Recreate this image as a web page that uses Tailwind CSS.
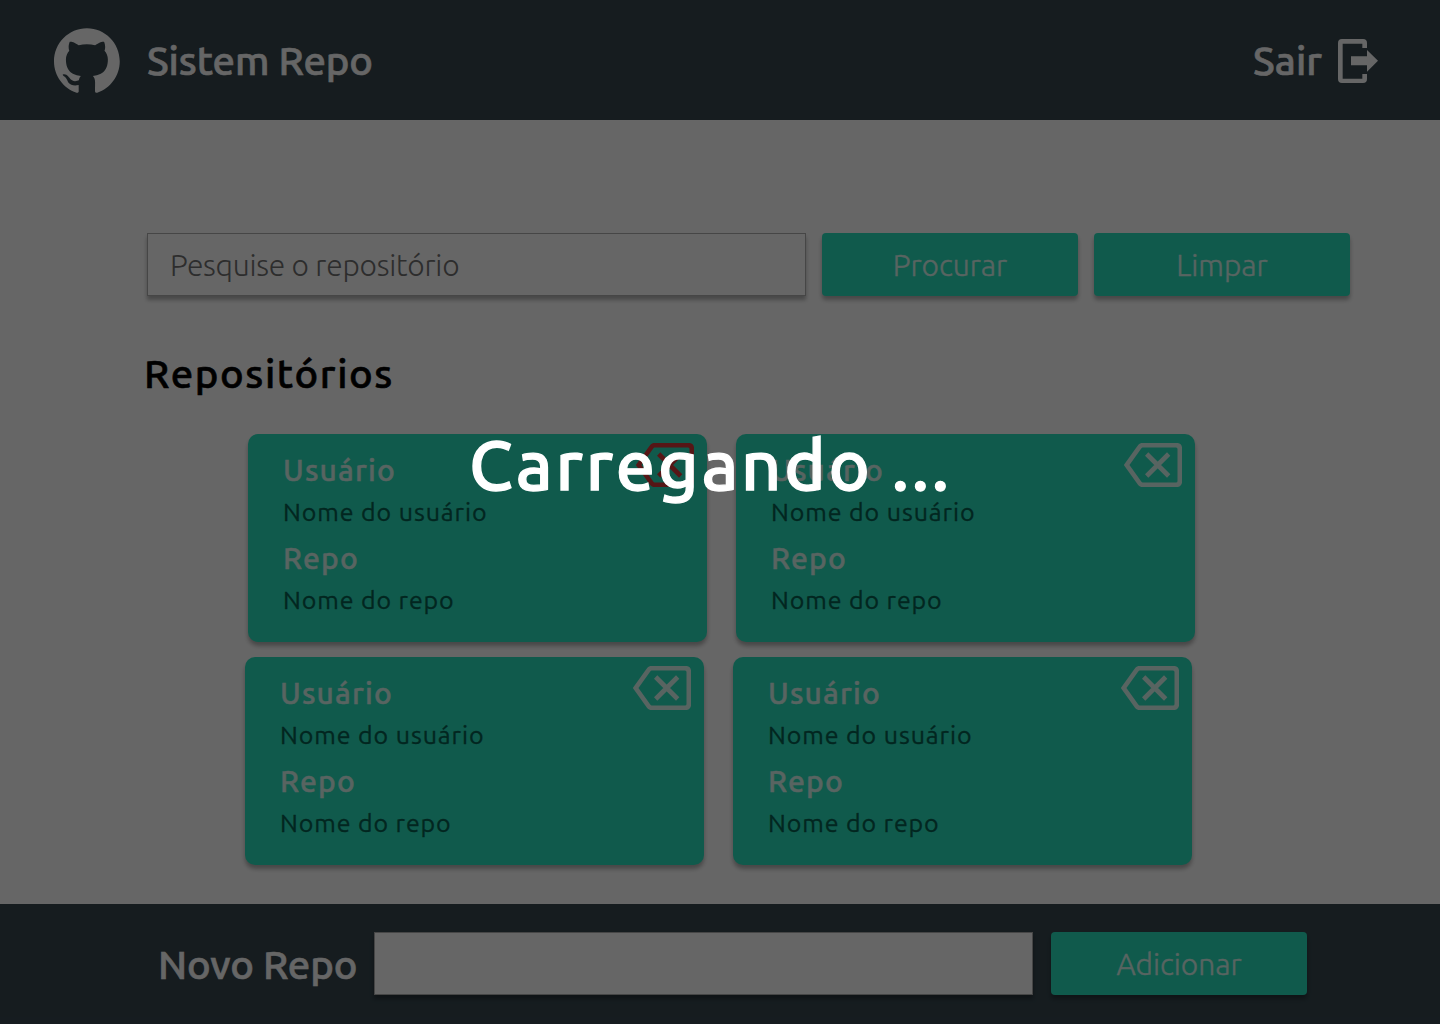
<!DOCTYPE html>
<html lang="pt-BR">
<head>
<meta charset="utf-8">
<title>Sistem Repo</title>
<script src="https://cdn.jsdelivr.net/npm/@tailwindcss/browser@4"></script>
</head>
<body class="relative flex h-[1024px] w-[1440px] flex-col overflow-hidden bg-white font-['Ubuntu','Noto_Sans',sans-serif]">
<svg class="hidden">
  <symbol id="del" viewBox="0 0 174 132">
    <path d="M56 6.500H156Q167.500 6.500 167.500 18V114Q167.500 125.500 156 125.500H56Q50 125.500 46.500 120L8 66L46.500 12Q50 6.500 56 6.500Z" fill="none" stroke="currentColor" stroke-width="14"/>
    <path d="M68 33L134 99M134 33L68 99" fill="none" stroke="currentColor" stroke-width="14"/>
  </symbol>
</svg>
<header class="flex h-[120px] shrink-0 items-center bg-[#37474f] pr-[62px] pl-[54px] text-white">
  <svg class="h-[65px] w-[66px]" viewBox="0 0 98 96" fill="currentColor"><path d="M48.854 0C21.839 0 0 22 0 49.217c0 21.756 13.993 40.172 33.405 46.69 2.427.49 3.316-1.059 3.316-2.362 0-1.141-.08-5.052-.08-9.127-13.59 2.934-16.42-5.867-16.42-5.867-2.184-5.704-5.42-7.17-5.42-7.17-4.448-3.015.324-3.015.324-3.015 4.934.326 7.523 5.052 7.523 5.052 4.367 7.496 11.404 5.378 14.235 4.074.404-3.178 1.699-5.378 3.074-6.6-10.839-1.141-22.243-5.378-22.243-24.283 0-5.378 1.94-9.778 5.014-13.2-.485-1.222-2.184-6.275.486-13.038 0 0 4.125-1.304 13.426 5.052a46.97 46.97 0 0 1 12.214-1.63c4.125 0 8.33.571 12.213 1.63 9.302-6.356 13.427-5.052 13.427-5.052 2.67 6.763.97 11.816.485 13.038 3.155 3.422 5.015 7.822 5.015 13.2 0 18.905-11.404 23.06-22.324 24.283 1.78 1.548 3.316 4.481 3.316 9.126 0 6.6-.08 11.897-.08 13.526 0 1.304.89 2.853 3.316 2.364 19.412-6.52 33.405-24.935 33.405-46.691C97.707 22 75.788 0 48.854 0z"/></svg>
  <h1 class="ml-[27px] pt-0.5 text-[40px] leading-[120px] font-medium tracking-[-0.15px] [-webkit-text-stroke:0.015em]">Sistem Repo</h1>
  <div class="ml-auto flex items-center pt-0.5">
    <span class="text-[40px] leading-[120px] font-medium [-webkit-text-stroke:0.015em]">Sair</span>
    <svg class="ml-4 h-11 w-10" viewBox="324 57 120 132" fill="currentColor"><path d="M336 57H399Q411 57 411 69V84H397V71H338V176H397V162H411V177Q411 189 399 189H336Q324 189 324 177V69Q324 57 336 57ZM363 109H411V90L444 122.500L411 155V136H363Z"/></svg>
  </div>
</header>
<main class="flex-1 pt-[113px]">
  <div class="ml-[147px] flex h-[63px] gap-4 text-[30px] leading-[64px] font-light">
    <div class="w-[659px] border border-[#b0b0b0] bg-white pl-[22px] leading-[62px] tracking-[-0.24px] text-[#707070] shadow-[0_4px_4px_rgba(0,0,0,0.3)]">Pesquise o repositório</div>
    <button class="w-64 rounded bg-[#2ae1be] text-[#dcfaf2] shadow-[0_4px_4px_rgba(0,0,0,0.3)] [-webkit-text-stroke:0.4px]">Procurar</button>
    <button class="w-64 rounded bg-[#2ae1be] text-[#dcfaf2] shadow-[0_4px_4px_rgba(0,0,0,0.3)] [-webkit-text-stroke:0.4px]">Limpar</button>
  </div>
  <h2 class="mt-[50px] mb-[32px] ml-[144px] text-[40px] leading-[56px] font-medium tracking-[0.04em] text-black [-webkit-text-stroke:0.015em]">Repositórios</h2>
  <div class="ml-[248px] flex gap-[29px]">
    <section class="flex h-[208px] w-[459px] justify-between rounded-[10px] bg-[#2ae1be] pt-[9px] pr-[13px] pl-[35px] shadow-[0_4px_4px_rgba(0,0,0,0.3)]">
      <div class="pt-[7px]"><h3 class="text-[30px] leading-10 font-medium tracking-[1.17px] text-[#dcfaf2] [-webkit-text-stroke:0.015em]">Usuário</h3><p class="text-[25px] leading-[44px] tracking-[0.9px] text-[#065f50] [-webkit-text-stroke:0.3px]">Nome do usuário</p><h3 class="mt-1 text-[30px] leading-10 font-medium tracking-[1.17px] text-[#dcfaf2] [-webkit-text-stroke:0.015em]">Repo</h3><p class="text-[25px] leading-[44px] tracking-[0.88px] text-[#065f50] [-webkit-text-stroke:0.3px]">Nome do repo</p></div>
      <svg class="h-11 w-[58px] text-[#d73739]"><use href="#del"/></svg>
    </section>
    <section class="flex h-[208px] w-[459px] justify-between rounded-[10px] bg-[#2ae1be] pt-[9px] pr-[13px] pl-[35px] shadow-[0_4px_4px_rgba(0,0,0,0.3)]">
      <div class="pt-[7px]"><h3 class="text-[30px] leading-10 font-medium tracking-[1.17px] text-[#dcfaf2] [-webkit-text-stroke:0.015em]">Usuário</h3><p class="text-[25px] leading-[44px] tracking-[0.9px] text-[#065f50] [-webkit-text-stroke:0.3px]">Nome do usuário</p><h3 class="mt-1 text-[30px] leading-10 font-medium tracking-[1.17px] text-[#dcfaf2] [-webkit-text-stroke:0.015em]">Repo</h3><p class="text-[25px] leading-[44px] tracking-[0.88px] text-[#065f50] [-webkit-text-stroke:0.3px]">Nome do repo</p></div>
      <svg class="h-11 w-[58px] text-[#dcfaf2]"><use href="#del"/></svg>
    </section>
  </div>
  <div class="mt-[15px] ml-[245px] flex gap-[29px]">
    <section class="flex h-[208px] w-[459px] justify-between rounded-[10px] bg-[#2ae1be] pt-[9px] pr-[13px] pl-[35px] shadow-[0_4px_4px_rgba(0,0,0,0.3)]">
      <div class="pt-[7px]"><h3 class="text-[30px] leading-10 font-medium tracking-[1.17px] text-[#dcfaf2] [-webkit-text-stroke:0.015em]">Usuário</h3><p class="text-[25px] leading-[44px] tracking-[0.9px] text-[#065f50] [-webkit-text-stroke:0.3px]">Nome do usuário</p><h3 class="mt-1 text-[30px] leading-10 font-medium tracking-[1.17px] text-[#dcfaf2] [-webkit-text-stroke:0.015em]">Repo</h3><p class="text-[25px] leading-[44px] tracking-[0.88px] text-[#065f50] [-webkit-text-stroke:0.3px]">Nome do repo</p></div>
      <svg class="h-11 w-[58px] text-[#dcfaf2]"><use href="#del"/></svg>
    </section>
    <section class="flex h-[208px] w-[459px] justify-between rounded-[10px] bg-[#2ae1be] pt-[9px] pr-[13px] pl-[35px] shadow-[0_4px_4px_rgba(0,0,0,0.3)]">
      <div class="pt-[7px]"><h3 class="text-[30px] leading-10 font-medium tracking-[1.17px] text-[#dcfaf2] [-webkit-text-stroke:0.015em]">Usuário</h3><p class="text-[25px] leading-[44px] tracking-[0.9px] text-[#065f50] [-webkit-text-stroke:0.3px]">Nome do usuário</p><h3 class="mt-1 text-[30px] leading-10 font-medium tracking-[1.17px] text-[#dcfaf2] [-webkit-text-stroke:0.015em]">Repo</h3><p class="text-[25px] leading-[44px] tracking-[0.88px] text-[#065f50] [-webkit-text-stroke:0.3px]">Nome do repo</p></div>
      <svg class="h-11 w-[58px] text-[#dcfaf2]"><use href="#del"/></svg>
    </section>
  </div>
</main>
<footer class="flex h-[120px] shrink-0 bg-[#37474f] pt-7 pl-[158px]">
  <span class="w-[216px] pt-px text-[40px] leading-[64px] font-medium tracking-[-0.15px] whitespace-nowrap text-white [-webkit-text-stroke:0.015em]">Novo Repo</span>
  <div class="h-[63px] w-[659px] border border-[#b0b0b0] bg-white shadow-[0_4px_4px_rgba(0,0,0,0.3)]"></div>
  <button class="ml-[18px] h-[63px] w-64 rounded bg-[#2ae1be] text-[30px] leading-[64px] font-light text-[#dcfaf2] shadow-[0_4px_4px_rgba(0,0,0,0.3)] [-webkit-text-stroke:0.4px]">Adicionar</button>
</footer>
<div class="absolute inset-0 bg-black/60 pt-[417px] pl-[469px]">
  <p class="text-[70px] leading-[94px] font-medium tracking-[0.04em] whitespace-nowrap text-white [-webkit-text-stroke:0.018em]">Carregando ...</p>
</div>
</body>
</html>
